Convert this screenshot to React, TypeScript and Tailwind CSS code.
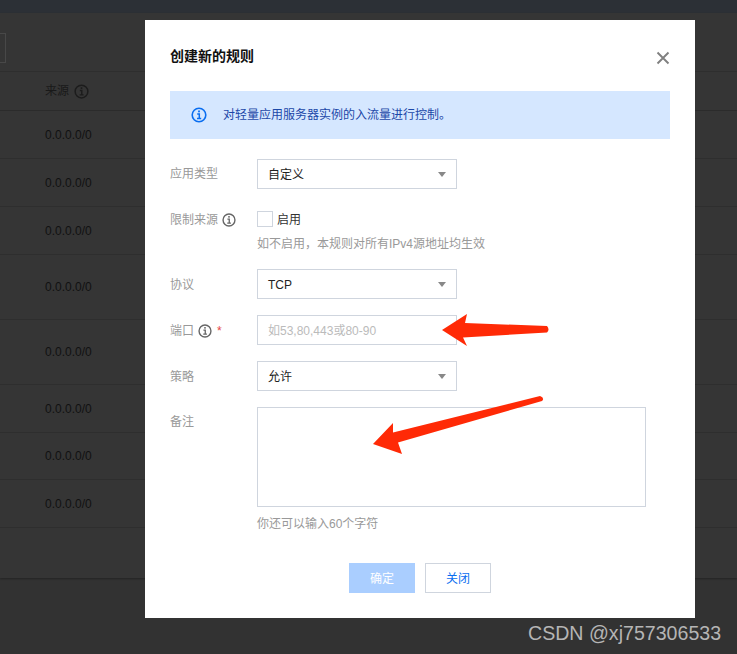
const rowHeights = [48, 48, 48, 65, 65, 48, 47, 48]

function InfoIcon({ className }: { className: string }) {
  return (
    <svg className={className} viewBox="0 0 16 16" fill="none" stroke="currentColor">
      <circle cx="8" cy="8" r="6.8" strokeWidth="1.6" />
      <rect x="7.1" y="3.5" width="1.8" height="1.8" fill="currentColor" stroke="none" />
      <path d="M6.2 7h2.1v4.4M6 11.6h4.2" strokeWidth="1.5" />
    </svg>
  )
}

function Select({ value }: { value: string }) {
  return (
    <div className="w-[200px] h-[30px] border border-[#cfd5de] flex items-center justify-between pl-[10px] pr-[10px] text-[12px] text-[#222]">
      <span className="pt-[2px]">{value}</span>
      <span className="w-0 h-0 border-x-[4px] border-x-transparent border-t-[5px] border-t-[#888]" />
    </div>
  )
}

function Label({ children, className }: { children: React.ReactNode; className: string }) {
  return <div className={`w-[87px] shrink-0 pt-[2px] flex items-center text-[12px] text-[#999] ${className}`}>{children}</div>
}

export default function App() {
  return (
    <div className="relative w-[737px] h-[654px] overflow-hidden bg-[#323232] font-['Liberation_Sans','Noto_Sans_CJK_SC',sans-serif]">
      <div className="h-[13px] bg-[#2c3036]" />

      {/* page behind the mask */}
      <div className="h-[565px] bg-[#353535] shadow-[0_1px_2px_rgba(0,0,0,0.3)]">
        <div className="h-[59px] border-b border-[#2e2e2e] pt-[20px]">
          <div className="w-[6px] h-[30px] border border-l-0 border-[#484848]" />
        </div>
        <div className="h-[39px] border-b border-[#2b2b2b] pl-[45px] flex items-center gap-[5px] text-[12px] text-[#191919]">
          <span>来源</span>
          <InfoIcon className="w-[15px] h-[15px] text-[#1c1c1c]" />
        </div>
        {rowHeights.map((h, i) => (
          <div
            key={i}
            style={{ height: h }}
            className="border-b border-[#2e2e2e] pl-[45px] flex items-center text-[12px] text-[#111]"
          >
            0.0.0.0/0
          </div>
        ))}
      </div>

      {/* dialog */}
      <div className="absolute left-[145px] top-[20px] w-[550px] h-[598px] bg-white px-[25px] pt-[26px]">
        <div className="flex items-start justify-between h-[45px]">
          <h3 className="text-[14px] leading-[20px] font-bold text-[#111]">创建新的规则</h3>
          <svg className="w-[14px] h-[14px] mt-[5px] text-[#808080]" viewBox="0 0 14 14" fill="none" stroke="currentColor" strokeWidth="1.9">
            <path d="M1.5 1.5l11 11M12.5 1.5l-11 11" />
          </svg>
        </div>

        <div className="h-[48px] bg-[#d5e7ff] flex items-center pl-[21px] gap-[16px] text-[12px] text-[#1c48a8]">
          <InfoIcon className="w-[16px] h-[16px] text-[#0a6ef0]" />
          <span>对轻量应用服务器实例的入流量进行控制。</span>
        </div>

        <div className="mt-[20px] flex">
          <Label className="h-[28px]">应用类型</Label>
          <Select value="自定义" />
        </div>

        <div className="mt-[22px] flex">
          <Label className="h-[16px] gap-[4px]">
            限制来源
            <InfoIcon className="w-[14px] h-[14px] text-[#666]" />
          </Label>
          <div>
            <div className="flex items-center gap-[4px] h-[16px] text-[12px] text-[#333]">
              <span className="w-[16px] h-[16px] border border-[#cfd5de]" />
              <span className="pt-[2px]">启用</span>
            </div>
            <p className="mt-[8px] text-[12px] leading-[18px] text-[#999]">如不启用，本规则对所有IPv4源地址均生效</p>
          </div>
        </div>

        <div className="mt-[16px] flex">
          <Label className="h-[30px]">协议</Label>
          <Select value="TCP" />
        </div>

        <div className="mt-[16px] flex">
          <Label className="h-[30px] gap-[4px]">
            端口
            <InfoIcon className="w-[14px] h-[14px] text-[#666]" />
            <span className="text-[#e54545] ml-[1px]">*</span>
          </Label>
          <div className="w-[200px] h-[30px] border border-[#cfd5de] flex items-center pl-[10px] pt-[2px] text-[12px] text-[#bbb]">
            如53,80,443或80-90
          </div>
        </div>

        <div className="mt-[16px] flex">
          <Label className="h-[30px]">策略</Label>
          <Select value="允许" />
        </div>

        <div className="mt-[16px] flex">
          <Label className="h-[28px]">备注</Label>
          <div className="w-[389px] h-[100px] border border-[#cfd5de]" />
        </div>

        <p className="mt-[8px] ml-[87px] text-[12px] leading-[18px] text-[#999]">你还可以输入60个字符</p>

        <div className="mt-[30px] flex justify-center gap-[10px] text-[12px]">
          <div className="w-[66px] h-[30px] pt-[2px] bg-[#aaceff] text-white flex items-center justify-center">确定</div>
          <div className="w-[66px] h-[30px] pt-[2px] border border-[#cfd5de] text-[#0a6ef0] flex items-center justify-center">关闭</div>
        </div>
      </div>

      {/* annotation arrows */}
      <svg className="absolute left-0 top-0 w-[737px] h-[654px] pointer-events-none" viewBox="0 0 737 654">
        <path d="M442 330L467 314L465 323L547 326Q550 329.5 547 332.5L463 337.5L467 346Z" fill="#ff2a06" />
        <path d="M373 444L393 423L393 432.5L540 396Q545 398 542 401L398 442.5L402 454Z" fill="#ff2a06" />
      </svg>

      <div className="absolute left-[528px] top-[621px] text-[19.6px] leading-[24px] text-[#b5b5b5] whitespace-nowrap">
        CSDN @xj757306533
      </div>
    </div>
  )
}
